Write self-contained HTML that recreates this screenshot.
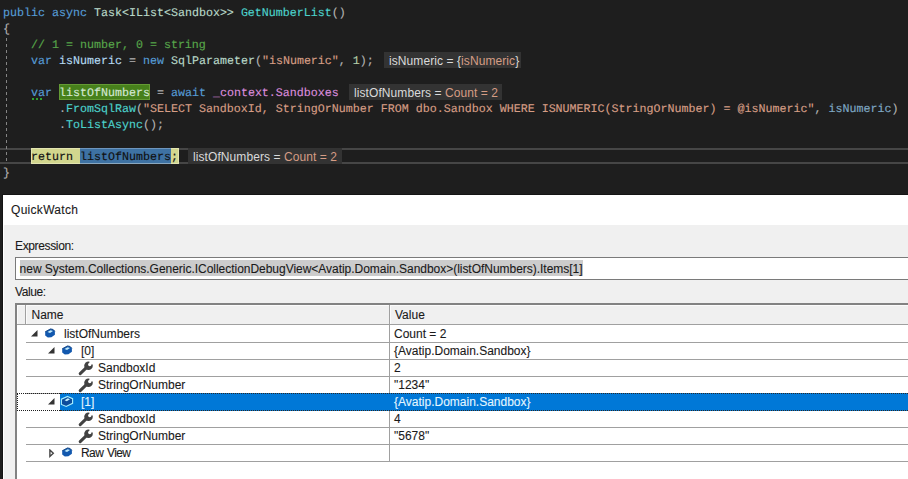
<!DOCTYPE html>
<html><head><meta charset="utf-8">
<style>
html,body{margin:0;padding:0;}
body{width:908px;height:479px;overflow:hidden;background:#1e1e1e;position:relative;}
.ln{position:absolute;left:3px;height:16px;line-height:16px;font-family:"Liberation Mono",monospace;font-size:11.666px;text-rendering:geometricPrecision;-webkit-text-stroke:0.15px currentColor;white-space:pre;color:#dcdcdc;}
.k{color:#569cd6}.t{color:#b8d8c8}.m{color:#4cd2cc}.v{color:#b4daf2}.p{color:#b4b4b4}.s{color:#d69d85}.n{color:#b5cea8}.c{color:#57a64a}.f{color:#da8cdc}
.tip{position:absolute;height:16px;line-height:16px;background:#333333;font-family:"Liberation Sans",sans-serif;font-size:12px;letter-spacing:0.08px;color:#dadada;padding-left:5px;box-sizing:border-box;white-space:pre;}
.tip span{position:relative;}
.tip .o{color:#d69d85}
.cur{position:absolute;left:0;width:908px;top:148px;height:16px;box-sizing:border-box;border-top:2px solid #464646;border-bottom:2px solid #464646;}
.guide{position:absolute;left:6px;top:38px;width:1px;height:123px;background:repeating-linear-gradient(to bottom,#858585 0,#858585 3px,transparent 3px,transparent 6px);}
.lbl,.gt{position:absolute;font-family:"Liberation Sans",sans-serif;font-size:12px;color:#1a1a1a;white-space:pre;line-height:14px;-webkit-text-stroke:0.1px currentColor;}
.sep{position:absolute;height:1px;background:#a0a0a0;}
.abs{position:absolute}
</style></head><body>
<div class="cur"></div>
<div class="guide"></div>
<div class="ln" style="top:5px"><span class="k">public</span> <span class="k">async</span> <span class="t">Task&lt;IList&lt;Sandbox&gt;&gt;</span> <span class="m">GetNumberList</span><span class="p">()</span></div>
<div class="ln" style="top:21px"><span class="p">{</span></div>
<div class="ln" style="top:37px">    <span class="c">// 1 = number, 0 = string</span></div>
<div class="ln" style="top:53px">    <span class="k">var</span> <span class="v">isNumeric</span> <span class="p">=</span> <span class="k">new</span> <span class="t">SqlParameter</span><span class="p">(</span><span class="s">"isNumeric"</span><span class="p">,</span> <span class="n">1</span><span class="p">);</span></div>
<div class="tip" style="left:384px;top:52px;width:137px"><span style="top:1px">isNumeric = {<span class="o">isNumeric</span>}<span></span></span></div>
<div class="abs" style="left:59px;top:84px;width:91px;height:16px;box-sizing:border-box;background:#47801b;border:1px solid #649a34;"></div>
<div class="ln" style="top:85px">    <span class="k">var</span> <span style="color:#d4e8d4">listOfNumbers</span> <span class="p">=</span> <span class="k">await</span> <span class="f">_context.Sandboxes</span></div>
<div class="abs" style="left:32px;top:98px;width:2px;height:2px;background:#30a030"></div>
<div class="abs" style="left:36px;top:98px;width:2px;height:2px;background:#30a030"></div>
<div class="abs" style="left:40px;top:98px;width:2px;height:2px;background:#30a030"></div>
<div class="tip" style="left:349px;top:84px;width:153px"><span style="top:1px">listOfNumbers = <span class="o">Count = 2</span></span></div>
<div class="ln" style="top:101px">        <span class="p">.</span><span class="m">FromSqlRaw</span><span class="p">(</span><span class="s">"SELECT SandboxId, StringOrNumber FROM dbo.Sandbox WHERE ISNUMERIC(StringOrNumber) = @isNumeric"</span><span class="p">,</span> <span style="color:#7fa8c4">isNumeric</span><span class="p">)</span></div>
<div class="ln" style="top:117px">        <span class="p">.</span><span class="m">ToListAsync</span><span class="p">();</span></div>
<div class="abs" style="left:31px;top:148px;width:148px;height:16px;box-sizing:border-box;background:#d2d68e;border:1px solid #e2e4b0;"></div>
<div class="abs" style="left:80px;top:148px;width:91px;height:16px;box-sizing:border-box;background:#3e72a3;border-top:1px solid #6d95bd;border-bottom:1px solid #8aa8c0;"></div>
<div class="ln" style="top:149px">    <span style="color:#101010">return listOfNumbers;</span></div>
<div class="tip" style="left:188px;top:148px;width:154px"><span style="top:1px">listOfNumbers = <span class="o">Count = 2</span></span></div>
<div class="ln" style="top:165px"><span class="p">}</span></div>
<div class="abs" style="left:2px;top:194px;width:906px;height:285px;background:#141414"></div>
<div class="abs" style="left:3px;top:195px;width:905px;height:30px;background:#fff"></div>
<div class="abs" style="left:3px;top:225px;width:905px;height:254px;background:#f0f0f0;border-left:1px solid #fff;box-sizing:border-box"></div>
<div class="lbl" style="left:11px;top:203px;letter-spacing:0.3px">QuickWatch</div>
<div class="lbl" style="left:15px;top:239px;letter-spacing:-0.36px">Expression:</div>
<div class="abs" style="left:15px;top:257px;width:900px;height:23px;box-sizing:border-box;background:#fff;border:1px solid #7a7a7a;"></div>
<div class="abs" style="left:20px;top:260px;width:563px;height:16px;background:#cccccc;"></div>
<div class="lbl" style="left:19.6px;top:262px;letter-spacing:-0.03px">new System.Collections.Generic.ICollectionDebugView&lt;Avatip.Domain.Sandbox&gt;(listOfNumbers).Items[1]</div>
<div class="lbl" style="left:15px;top:285px;letter-spacing:-0.4px">Value:</div>
<div class="abs" style="left:15px;top:303px;width:893px;height:176px;background:#fff;"></div>
<div class="abs" style="left:15px;top:303px;width:2px;height:176px;background:#828282"></div>
<div class="abs" style="left:15px;top:303px;width:893px;height:2px;background:#828282"></div>
<div class="abs" style="left:17px;top:305px;width:891px;height:19px;background:#f0f0f0"></div>
<div class="abs" style="left:17px;top:324px;width:891px;height:1px;background:#a0a0a0"></div>
<div class="abs" style="left:17px;top:305px;width:891px;height:1px;background:#fbfbfb"></div>
<div class="abs" style="left:17px;top:305px;width:1px;height:19px;background:#fbfbfb"></div>
<div class="abs" style="left:26px;top:305px;width:1px;height:19px;background:#fbfbfb"></div>
<div class="abs" style="left:390px;top:305px;width:1px;height:19px;background:#fbfbfb"></div>
<div class="abs" style="left:25px;top:305px;width:1px;height:19px;background:#a0a0a0"></div>
<div class="abs" style="left:389px;top:305px;width:1px;height:157px;background:#a0a0a0"></div>
<div class="gt" style="left:31.5px;top:308px">Name</div>
<div class="gt" style="left:395px;top:308px">Value</div>
<div class="sep" style="left:26px;top:342px;width:882px"></div>
<svg width="7" height="7" viewBox="0 0 7 7" class="abs" style="left:31px;top:330px"><path d="M0 6.5 L6.5 0 L6.5 6.5 Z" fill="#333"/></svg>
<svg width="12" height="11" viewBox="0 0 12 11" class="abs" style="left:44px;top:328px"><path d="M1.2 3.8 L6.5 0.9 L9.1 1.5 L10.9 3.3 L10.9 6.8 L7.4 9.3 L3.8 9.5 L1.2 7.6 Z" fill="#1258ae"/><path d="M1.2 3.8 L6.5 0.9 L9.1 1.5 L10.9 3.3" fill="none" stroke="#0d3f80" stroke-width="0.9"/><path d="M3.5 3.9 L6.6 2.2 L9 3.0 L6 4.9 Z" fill="#c2ecfc"/></svg>
<div class="gt" style="left:64px;top:327px;color:#1a1a1a;letter-spacing:0">listOfNumbers</div>
<div class="gt" style="left:394px;top:327px;color:#1a1a1a">Count = 2</div>
<div class="sep" style="left:26px;top:359px;width:882px"></div>
<svg width="7" height="7" viewBox="0 0 7 7" class="abs" style="left:48px;top:347px"><path d="M0 6.5 L6.5 0 L6.5 6.5 Z" fill="#333"/></svg>
<svg width="12" height="11" viewBox="0 0 12 11" class="abs" style="left:61px;top:345px"><path d="M1.2 3.8 L6.5 0.9 L9.1 1.5 L10.9 3.3 L10.9 6.8 L7.4 9.3 L3.8 9.5 L1.2 7.6 Z" fill="#1258ae"/><path d="M1.2 3.8 L6.5 0.9 L9.1 1.5 L10.9 3.3" fill="none" stroke="#0d3f80" stroke-width="0.9"/><path d="M3.5 3.9 L6.6 2.2 L9 3.0 L6 4.9 Z" fill="#c2ecfc"/></svg>
<div class="gt" style="left:81px;top:344px;color:#1a1a1a;letter-spacing:0">[0]</div>
<div class="gt" style="left:394px;top:344px;color:#1a1a1a">{Avatip.Domain.Sandbox}</div>
<div class="sep" style="left:26px;top:376px;width:882px"></div>
<svg width="16" height="15" viewBox="0 0 16 15" class="abs" style="left:78px;top:361px"><path d="M2.2 12.6 L8.4 6.6" stroke="#424242" stroke-width="3" stroke-linecap="round"/><circle cx="10.5" cy="4.7" r="4.3" fill="#424242"/><circle cx="11.8" cy="3.5" r="1.7" fill="#fff"/><path d="M11.3 3.2 L11.6 -1 L16 -1 L16 3.2 Z" fill="#fff"/></svg>
<div class="gt" style="left:98px;top:361px;color:#1a1a1a;letter-spacing:0">SandboxId</div>
<div class="gt" style="left:394px;top:361px;color:#1a1a1a">2</div>
<div class="sep" style="left:26px;top:393px;width:882px"></div>
<svg width="16" height="15" viewBox="0 0 16 15" class="abs" style="left:78px;top:378px"><path d="M2.2 12.6 L8.4 6.6" stroke="#424242" stroke-width="3" stroke-linecap="round"/><circle cx="10.5" cy="4.7" r="4.3" fill="#424242"/><circle cx="11.8" cy="3.5" r="1.7" fill="#fff"/><path d="M11.3 3.2 L11.6 -1 L16 -1 L16 3.2 Z" fill="#fff"/></svg>
<div class="gt" style="left:98px;top:378px;color:#1a1a1a;letter-spacing:0">StringOrNumber</div>
<div class="gt" style="left:394px;top:378px;color:#1a1a1a">&quot;1234&quot;</div>
<div class="abs" style="left:60px;top:394px;width:848px;height:16px;background:#0078d7"></div>
<div class="abs" style="left:17px;top:393px;width:43px;height:18px;box-sizing:border-box;border:1px dotted #1e1e1e;border-right:none"></div>
<div class="abs" style="left:60px;top:393px;width:848px;height:18px;box-sizing:border-box;border-top:1px dotted #2a2a2a;border-bottom:1px dotted #2a2a2a;background:#0078d7"></div>
<svg width="7" height="7" viewBox="0 0 7 7" class="abs" style="left:48px;top:398px"><path d="M0 6.5 L6.5 0 L6.5 6.5 Z" fill="#333"/></svg>
<svg width="14" height="13" viewBox="0 0 14 13" class="abs" style="left:60px;top:395px"><path d="M7.6 1.4 L12.6 3.7 L12.6 8.3 L6.2 11.5 L1.4 9.4 L1.4 4.2 Z" fill="#0c4c9c" stroke="#a8f0ff" stroke-width="1.1"/><path d="M4.6 5.2 L7.8 3.2 L10 4.2 L6.8 6.2 Z" fill="#c6f2ff"/></svg>
<div class="gt" style="left:81px;top:395px;color:#e4f6ff;letter-spacing:0">[1]</div>
<div class="gt" style="left:394px;top:395px;color:#e4f6ff">{Avatip.Domain.Sandbox}</div>
<div class="sep" style="left:26px;top:427px;width:882px"></div>
<svg width="16" height="15" viewBox="0 0 16 15" class="abs" style="left:78px;top:412px"><path d="M2.2 12.6 L8.4 6.6" stroke="#424242" stroke-width="3" stroke-linecap="round"/><circle cx="10.5" cy="4.7" r="4.3" fill="#424242"/><circle cx="11.8" cy="3.5" r="1.7" fill="#fff"/><path d="M11.3 3.2 L11.6 -1 L16 -1 L16 3.2 Z" fill="#fff"/></svg>
<div class="gt" style="left:98px;top:412px;color:#1a1a1a;letter-spacing:0">SandboxId</div>
<div class="gt" style="left:394px;top:412px;color:#1a1a1a">4</div>
<div class="sep" style="left:26px;top:444px;width:882px"></div>
<svg width="16" height="15" viewBox="0 0 16 15" class="abs" style="left:78px;top:429px"><path d="M2.2 12.6 L8.4 6.6" stroke="#424242" stroke-width="3" stroke-linecap="round"/><circle cx="10.5" cy="4.7" r="4.3" fill="#424242"/><circle cx="11.8" cy="3.5" r="1.7" fill="#fff"/><path d="M11.3 3.2 L11.6 -1 L16 -1 L16 3.2 Z" fill="#fff"/></svg>
<div class="gt" style="left:98px;top:429px;color:#1a1a1a;letter-spacing:0">StringOrNumber</div>
<div class="gt" style="left:394px;top:429px;color:#1a1a1a">&quot;5678&quot;</div>
<div class="sep" style="left:26px;top:461px;width:882px"></div>
<svg width="6" height="9" viewBox="0 0 6 9" class="abs" style="left:49px;top:449px"><path d="M0.9 1 L4.3 4.2 L0.9 7.4 Z" fill="none" stroke="#444" stroke-width="1.4"/></svg>
<svg width="12" height="11" viewBox="0 0 12 11" class="abs" style="left:61px;top:447px"><path d="M1.2 3.8 L6.5 0.9 L9.1 1.5 L10.9 3.3 L10.9 6.8 L7.4 9.3 L3.8 9.5 L1.2 7.6 Z" fill="#1258ae"/><path d="M1.2 3.8 L6.5 0.9 L9.1 1.5 L10.9 3.3" fill="none" stroke="#0d3f80" stroke-width="0.9"/><path d="M3.5 3.9 L6.6 2.2 L9 3.0 L6 4.9 Z" fill="#c2ecfc"/></svg>
<div class="gt" style="left:81px;top:446px;color:#1a1a1a;letter-spacing:-0.6px;word-spacing:1px">Raw View</div>
</body></html>
